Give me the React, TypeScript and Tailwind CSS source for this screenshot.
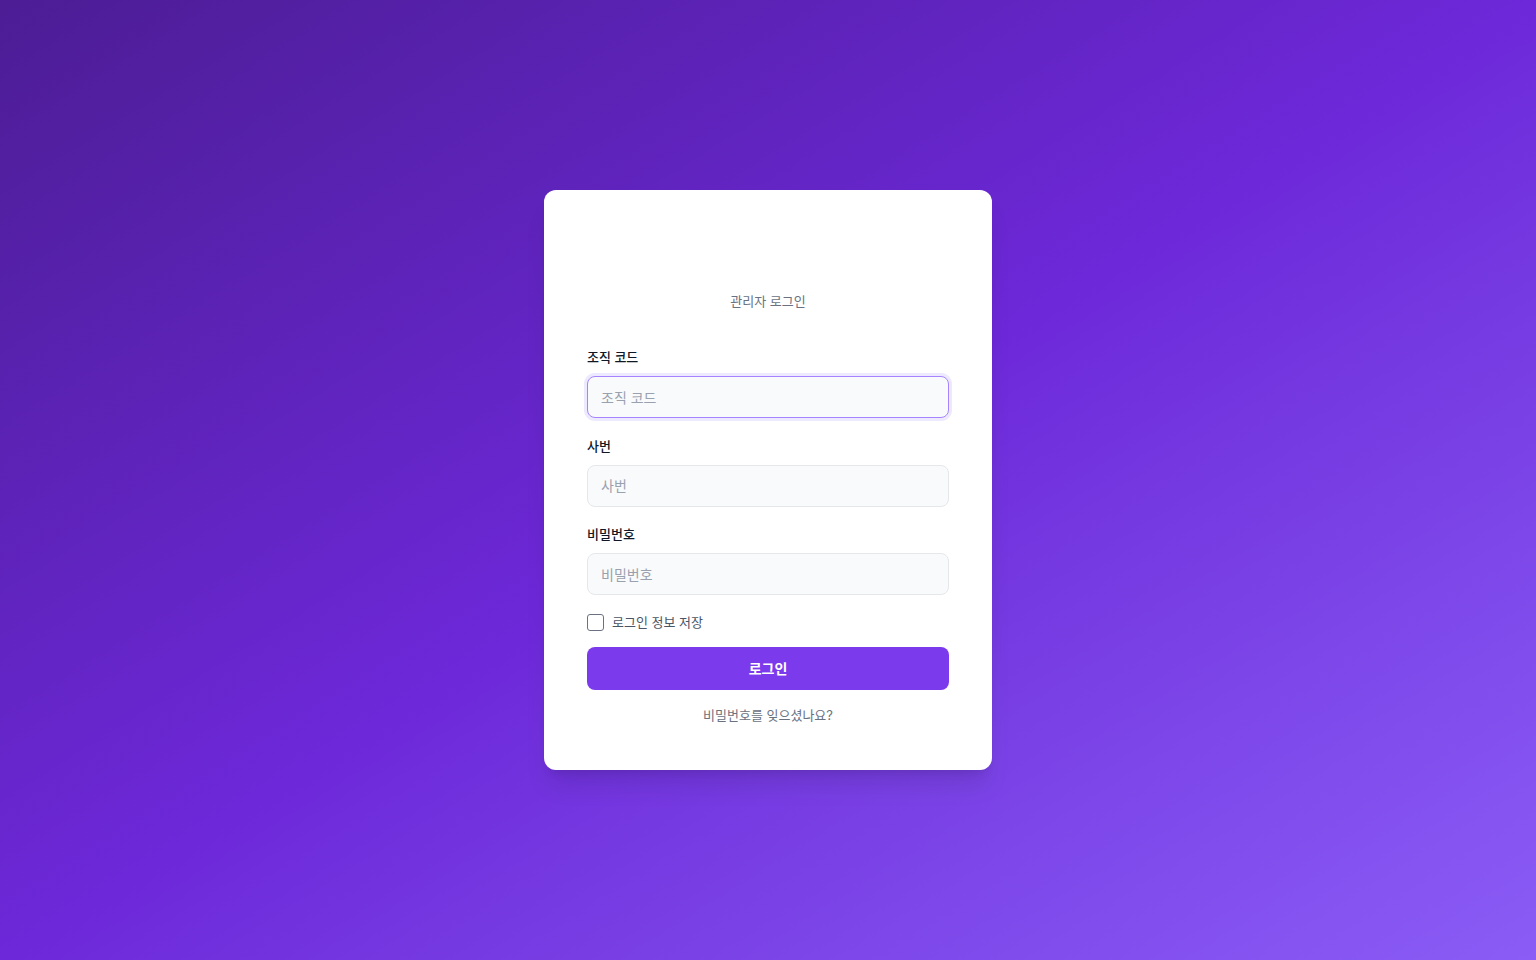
export default function App() {
  const fields = [
    { id: 'org', label: '조직 코드', type: 'text', focused: true },
    { id: 'emp', label: '사번', type: 'text', focused: false },
    { id: 'pw', label: '비밀번호', type: 'password', focused: false },
  ]

  return (
    <div
      className="min-h-screen w-full flex items-center justify-center bg-linear-to-br from-[#4c1d95] via-[#6d28d9] to-[#8b5cf6]"
      style={{ fontFamily: 'Inter, "Noto Sans CJK KR", sans-serif' }}
    >
      <div className="w-[448px] bg-white rounded-xl shadow-xl px-[43px] pt-10 pb-[45px]">
        {/* logo placeholder */}
        <div className="h-[61px]" />
        <p className="text-center text-[13px] leading-5 text-gray-500 mb-9">관리자 로그인</p>

        <form onSubmit={(e) => e.preventDefault()}>
          <div className="flex flex-col gap-[17.5px]">
            {fields.map((f) => (
              <div key={f.id}>
                <label htmlFor={f.id} className="block text-[13px] leading-5 font-medium text-gray-900 mb-[9px]">
                  {f.label}
                </label>
                <input
                  id={f.id}
                  type={f.type}
                  placeholder={f.label}
                  className={
                    f.focused
                      ? 'w-full h-[42px] px-[13px] rounded-lg bg-gray-50 border border-violet-400 ring-[3px] ring-violet-100 text-sm text-gray-900 placeholder:text-gray-400 outline-none'
                      : 'w-full h-[42px] px-[13px] rounded-lg bg-gray-50 border border-gray-200 text-sm text-gray-900 placeholder:text-gray-400 outline-none'
                  }
                />
              </div>
            ))}
          </div>

          <label className="mt-[17px] flex items-center gap-2 text-[13px] leading-5 text-gray-600">
            <span className="w-[17px] h-[17px] rounded-[3px] border-[1.5px] border-gray-500 bg-white" />
            로그인 정보 저장
          </label>

          <button
            type="submit"
            className="mt-[15px] w-full h-[43px] rounded-lg bg-[#7c3aed] text-white text-sm font-semibold"
          >
            로그인
          </button>
        </form>

        <p className="mt-[15px] text-center text-[13px] leading-5 text-gray-500">비밀번호를 잊으셨나요?</p>
      </div>
    </div>
  )
}
